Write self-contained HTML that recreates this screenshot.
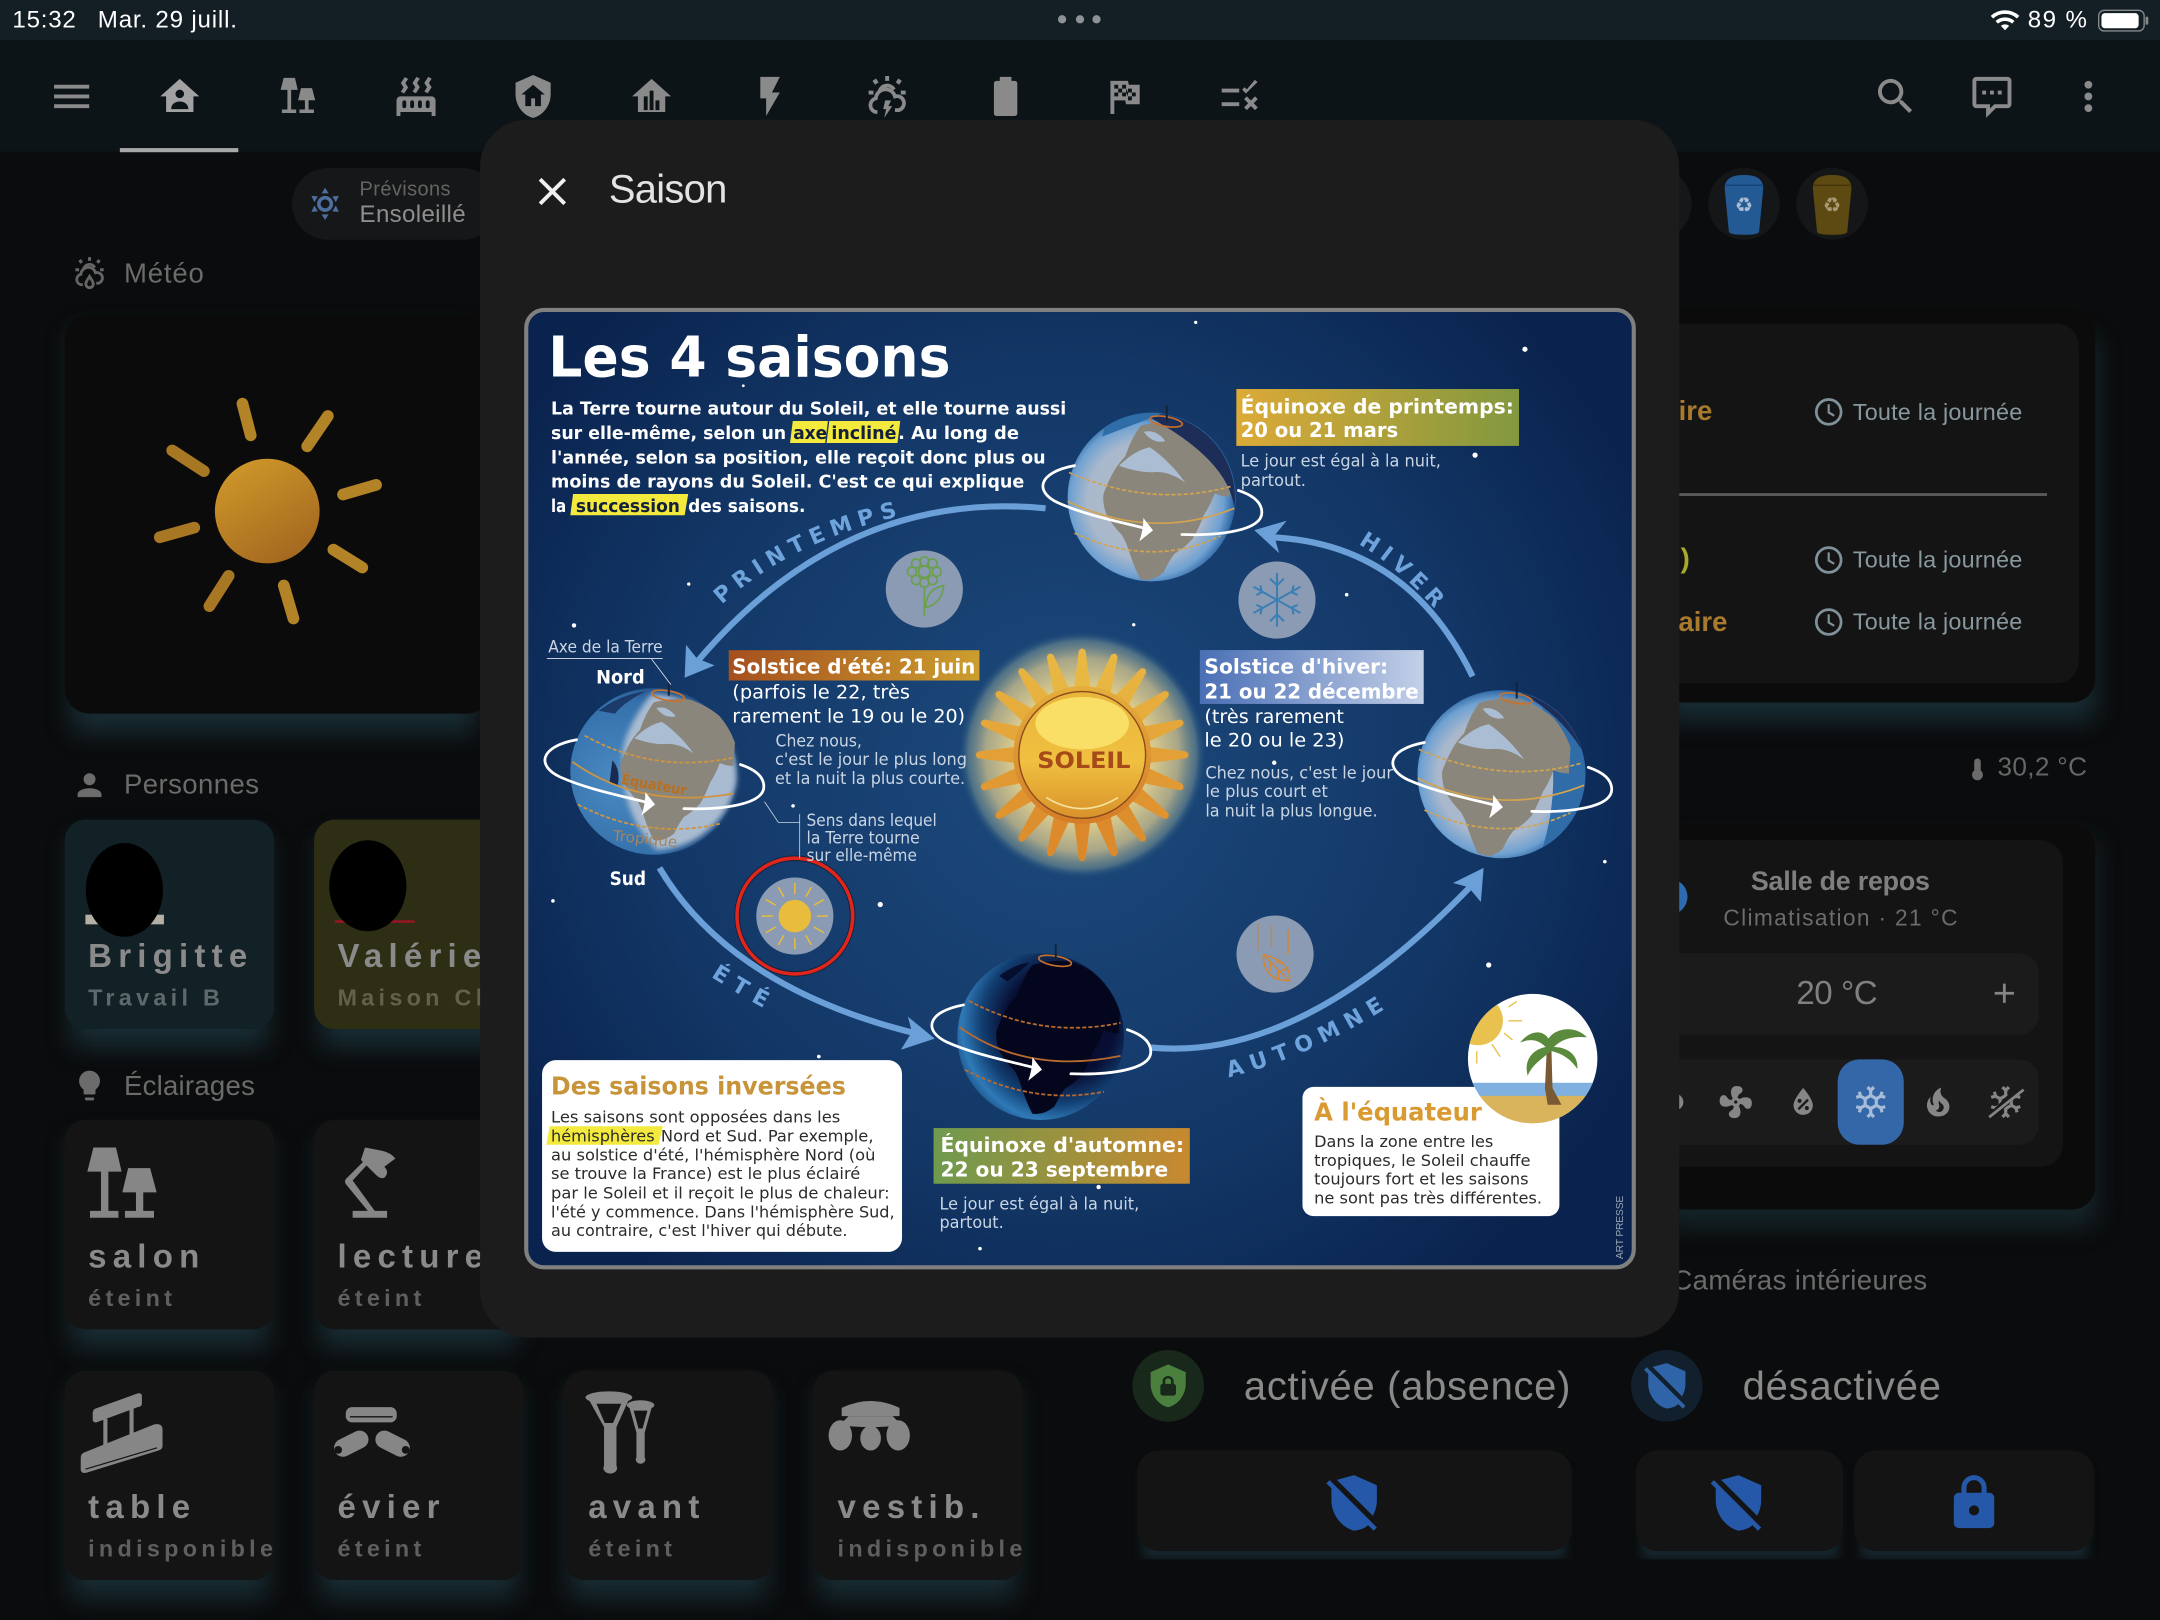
<!DOCTYPE html>
<html lang="fr">
<head>
<meta charset="utf-8">
<title>Saison</title>
<style>
html,body{margin:0;padding:0;background:#0b0c0d;width:2160px;height:1620px;overflow:hidden}
svg{display:block}
text{font-family:"Liberation Sans",sans-serif;white-space:pre}
.m{font-family:"DejaVu Sans","Liberation Sans",sans-serif}
.b{font-weight:700}
.n{font-size:24px;font-weight:700;fill:#8a8a8a;letter-spacing:4.5px}
.s{font-size:17px;font-weight:700;fill:#5f5f5f;letter-spacing:3.1px}
.h{font-size:20px;fill:#6b6b6b}
.t{font-size:17px;fill:#87999f}
.w{font-size:15px;font-weight:700;fill:#fff}
.w2{font-size:13.5px;fill:#fff}
.l{font-size:12px;fill:#c9d5e3}
.k{font-size:11.5px;fill:#2b2b2b}
.p{font-size:13px;font-weight:700;fill:#fff}
.a{font-size:16px;font-weight:700;fill:#6fa3dc}
</style>
</head>
<body>
<svg xmlns="http://www.w3.org/2000/svg" width="2160" height="1620" viewBox="0 0 1568 1176">
<defs>
<filter id="bl" x="-30%" y="-30%" width="160%" height="160%"><feGaussianBlur stdDeviation="9"/></filter>
<filter id="bs" x="-30%" y="-30%" width="160%" height="160%"><feGaussianBlur stdDeviation="4"/></filter>
<filter id="b2" x="-20%" y="-20%" width="140%" height="140%"><feGaussianBlur stdDeviation="2"/></filter>
<radialGradient id="bg" gradientUnits="userSpaceOnUse" cx="770" cy="560" r="470"><stop offset="0" stop-color="#1c4a7c"/><stop offset=".6" stop-color="#133868"/><stop offset="1" stop-color="#0a234e"/></radialGradient>
<radialGradient id="glow" cx=".5" cy=".5" r=".5"><stop offset=".55" stop-color="#dccb8c"/><stop offset=".78" stop-color="#a8a688"/><stop offset=".92" stop-color="#5f7f8c" stop-opacity=".75"/><stop offset="1" stop-color="#1c4a7c" stop-opacity="0"/></radialGradient>
<linearGradient id="sund" x1="0" y1="0" x2="0" y2="1"><stop offset="0" stop-color="#e9b53c"/><stop offset=".55" stop-color="#f0c040"/><stop offset="1" stop-color="#d8922a"/></linearGradient>
<linearGradient id="sunr" x1="0" y1="0" x2="0" y2="1"><stop offset="0" stop-color="#e4ae3c"/><stop offset="1" stop-color="#d67c28"/></linearGradient>
<linearGradient id="ms" x1="0" y1="0" x2=".6" y2="1"><stop offset="0" stop-color="#d49c2a"/><stop offset="1" stop-color="#a56a20"/></linearGradient>
<linearGradient id="g1" x1="0" x2="1"><stop offset="0" stop-color="#a64f1e"/><stop offset="1" stop-color="#cc9e2e"/></linearGradient>
<linearGradient id="g2" x1="0" x2="1"><stop offset="0" stop-color="#dcaa37"/><stop offset="1" stop-color="#82983f"/></linearGradient>
<linearGradient id="g3" x1="0" x2="1"><stop offset="0" stop-color="#4a6fb5"/><stop offset="1" stop-color="#c3d0e8"/></linearGradient>
<linearGradient id="g4" x1="0" x2="1"><stop offset="0" stop-color="#6f9a4e"/><stop offset="1" stop-color="#c8892f"/></linearGradient>
<radialGradient id="gl" cx=".47" cy=".52" r=".52"><stop offset="0" stop-color="#b4bcc8"/><stop offset=".68" stop-color="#a9b8cc"/><stop offset=".88" stop-color="#6fa1d2"/><stop offset="1" stop-color="#2f68a4"/></radialGradient>
<radialGradient id="gm" cx=".3" cy=".55" r=".6"><stop offset="0" stop-color="#4b8ac2"/><stop offset=".8" stop-color="#3470aa"/><stop offset="1" stop-color="#224f85"/></radialGradient>
<radialGradient id="gd" cx=".62" cy=".42" r=".66"><stop offset="0" stop-color="#05092a"/><stop offset=".5" stop-color="#080f34"/><stop offset=".72" stop-color="#123f72"/><stop offset=".9" stop-color="#2f7ab8"/><stop offset="1" stop-color="#1d5488"/></radialGradient>
<clipPath id="palm"><circle cx="1112.6" cy="768.5" r="47"/></clipPath>
<clipPath id="gc"><circle r="60"/></clipPath>

<symbol id="i-menu" viewBox="0 0 24 24"><path d="M3,6H21V8H3V6M3,11H21V13H3V11M3,16H21V18H3V16Z"/></symbol>
<symbol id="i-homeacc" viewBox="0 0 24 24"><path fill-rule="evenodd" d="M12,3L2,12H5V20H19V12H22L12,3M12,8.5A2.2,2.2 0 0,1 14.2,10.7A2.2,2.2 0 0,1 12,12.9A2.2,2.2 0 0,1 9.8,10.7A2.2,2.2 0 0,1 12,8.5M7.6,18.5C7.6,16 9.6,14.6 12,14.6C14.4,14.6 16.4,16 16.4,18.5Z"/></symbol>
<symbol id="i-radiator" viewBox="0 0 24 24"><path fill-rule="evenodd" d="M7.95,3L6.53,5.19L7.95,7.4H7.94L5.95,10.5L4.22,9.6L5.64,7.39L4.22,5.19L6.22,2.09L7.95,3M13.95,2.89L12.53,5.1L13.95,7.3L13.94,7.31L11.95,10.4L10.22,9.5L11.64,7.3L10.22,5.1L12.22,2L13.95,2.89M20,2.89L18.56,5.1L20,7.3V7.31L18,10.4L16.25,9.5L17.67,7.3L16.25,5.1L18.25,2L20,2.89M2,22V14A2,2 0 0,1 4,12H20A2,2 0 0,1 22,14V22H20V20H4V22H2M6,14A1,1 0 0,0 5,15V17A1,1 0 0,0 6,18A1,1 0 0,0 7,17V15A1,1 0 0,0 6,14M10,14A1,1 0 0,0 9,15V17A1,1 0 0,0 10,18A1,1 0 0,0 11,17V15A1,1 0 0,0 10,14M14,14A1,1 0 0,0 13,15V17A1,1 0 0,0 14,18A1,1 0 0,0 15,17V15A1,1 0 0,0 14,14M18,14A1,1 0 0,0 17,15V17A1,1 0 0,0 18,18A1,1 0 0,0 19,17V15A1,1 0 0,0 18,14Z"/></symbol>
<symbol id="i-shhome" viewBox="0 0 24 24"><path fill-rule="evenodd" d="M12,1L3,5V11C3,16.55 6.84,21.74 12,23C17.16,21.74 21,16.55 21,11V5L12,1M12,6L18,11H16V17H13V13H11V17H8V11H6L12,6Z"/></symbol>
<symbol id="i-homean" viewBox="0 0 24 24"><path fill-rule="evenodd" d="M12,3L2,12H5V20H19V12H22L12,3M8,12H10V19H8V12M11,9H13V19H11V9M14,14H16V19H14V14Z"/></symbol>
<symbol id="i-flash" viewBox="0 0 24 24"><path d="M7,2V13H10V22L17,10H13L17,2H7Z"/></symbol>
<symbol id="i-battery" viewBox="0 0 24 24"><path d="M16.67,4H15V2H9V4H7.33A1.33,1.33 0 0,0 6,5.33V20.67C6,21.4 6.6,22 7.33,22H16.67A1.33,1.33 0 0,0 18,20.67V5.33C18,4.6 17.4,4 16.67,4Z"/></symbol>
<symbol id="i-flag" viewBox="0 0 24 24"><path d="M14.4,6H20V16H13L12.6,14H7V21H5V4H14L14.4,6M14,14H16V12H18V10H16V8H14V10L13,8V6H11V8H9V6H7V8H9V10H7V12H9V10H11V12H13V10L14,12V14M11,10V8H13V10H11M14,10H16V12H14V10Z"/></symbol>
<symbol id="i-checks" viewBox="0 0 24 24"><path d="M2,8H11V10H2V8M2,15H11V17H2V15M14.4,10.5L12.5,8.5L13.7,7.3L14.9,8.4L19,3.5L20.4,4.6L14.4,10.5M13.5,13.4L14.9,12L17,14.1L19.1,12L20.5,13.4L18.4,15.5L20.5,17.6L19.1,19L17,16.9L14.9,19L13.5,17.6L15.6,15.5L13.5,13.4Z"/></symbol>
<symbol id="i-search" viewBox="0 0 24 24"><path d="M9.5,3A6.5,6.5 0 0,1 16,9.5C16,11.11 15.41,12.59 14.44,13.73L14.71,14H15.5L20.5,19L19,20.5L14,15.5V14.71L13.73,14.44C12.59,15.41 11.11,16 9.5,16A6.5,6.5 0 0,1 3,9.5A6.5,6.5 0 0,1 9.5,3M9.5,5C7,5 5,7 5,9.5C5,12 7,14 9.5,14C12,14 14,12 14,9.5C14,7 12,5 9.5,5Z"/></symbol>
<symbol id="i-msg" viewBox="0 0 24 24"><path fill-rule="evenodd" d="M4,2H20A2,2 0 0,1 22,4V16A2,2 0 0,1 20,18H14L9,23V18H4A2,2 0 0,1 2,16V4A2,2 0 0,1 4,2M4,4V16H11V18.2L13.2,16H20V4H4M7,9H9V11H7V9M11,9H13V11H11V9M15,9H17V11H15V9Z"/></symbol>
<symbol id="i-dots" viewBox="0 0 24 24"><path d="M12,16A2,2 0 0,1 14,18A2,2 0 0,1 12,20A2,2 0 0,1 10,18A2,2 0 0,1 12,16M12,10A2,2 0 0,1 14,12A2,2 0 0,1 12,14A2,2 0 0,1 10,12A2,2 0 0,1 12,10M12,4A2,2 0 0,1 14,6A2,2 0 0,1 12,8A2,2 0 0,1 10,6A2,2 0 0,1 12,4Z"/></symbol>
<symbol id="i-close" viewBox="0 0 24 24"><path d="M19,6.41L17.59,5L12,10.59L6.41,5L5,6.41L10.59,12L5,17.59L6.41,19L12,13.41L17.59,19L19,17.59L13.41,12L19,6.41Z"/></symbol>
<symbol id="i-acc" viewBox="0 0 24 24"><path d="M12,4A4,4 0 0,1 16,8A4,4 0 0,1 12,12A4,4 0 0,1 8,8A4,4 0 0,1 12,4M12,14C16.42,14 20,15.79 20,18V20H4V18C4,15.79 7.58,14 12,14Z"/></symbol>
<symbol id="i-bulb" viewBox="0 0 24 24"><path d="M12,2A7,7 0 0,0 5,9C5,11.38 6.19,13.47 8,14.74V17A1,1 0 0,0 9,18H15A1,1 0 0,0 16,17V14.74C17.81,13.47 19,11.38 19,9A7,7 0 0,0 12,2M9,21A1,1 0 0,0 10,22H14A1,1 0 0,0 15,21V20H9V21Z"/></symbol>
<symbol id="i-lock" viewBox="0 0 24 24"><path fill-rule="evenodd" d="M12,17A2,2 0 0,0 14,15C14,13.89 13.1,13 12,13A2,2 0 0,0 10,15A2,2 0 0,0 12,17M18,8A2,2 0 0,1 20,10V20A2,2 0 0,1 18,22H6A2,2 0 0,1 4,20V10C4,8.89 4.9,8 6,8H7V6A5,5 0 0,1 12,1A5,5 0 0,1 17,6V8H18M12,3A3,3 0 0,0 9,6V8H15V6A3,3 0 0,0 12,3Z"/></symbol>
<symbol id="i-shoff" viewBox="0 0 24 24"><path d="M1,4.27L2.28,3L21,21.72L19.73,23L17.5,20.79C16.23,22 14.9,22.6 12,23C7,21.74 3,16.55 3,11V6.27L1,4.27M12,1L21,5V11C21,13.14 20.4,15.23 19.4,17.1L5.14,2.86L12,1Z"/></symbol>
<symbol id="i-shlock" viewBox="0 0 24 24"><path fill-rule="evenodd" d="M12,1L3,5V11C3,16.55 6.84,21.74 12,23C17.16,21.74 21,16.55 21,11V5L12,1M12,7C13.4,7 14.8,8.1 14.8,9.5V11C15.4,11 16,11.6 16,12.3V15.8C16,16.4 15.4,17 14.7,17H9.2C8.6,17 8,16.4 8,15.7V12.2C8,11.6 8.6,11 9.2,11V9.5C9.2,8.1 10.6,7 12,7M12,8.2C11.2,8.2 10.5,8.7 10.5,9.5V11H13.5V9.5C13.5,8.7 12.8,8.2 12,8.2Z"/></symbol>
<symbol id="i-fan" viewBox="0 0 24 24"><path d="M12,11A1,1 0 0,0 11,12A1,1 0 0,0 12,13A1,1 0 0,0 13,12A1,1 0 0,0 12,11M12.5,2C17,2 17.11,5.57 14.75,6.75C13.76,7.24 13.32,8.29 13.13,9.22C13.61,9.42 14.03,9.73 14.35,10.13C18.05,8.13 22.03,8.92 22.03,12.5C22.03,17 18.46,17.1 17.28,14.73C16.78,13.74 15.72,13.3 14.79,13.11C14.59,13.59 14.28,14 13.88,14.34C15.87,18.03 15.08,22 11.5,22C7,22 6.91,18.42 9.27,17.24C10.25,16.75 10.69,15.71 10.89,14.79C10.4,14.59 9.97,14.27 9.65,13.87C5.96,15.85 2,15.07 2,11.5C2,7 5.56,6.89 6.74,9.26C7.24,10.25 8.29,10.68 9.22,10.87C9.41,10.39 9.73,9.97 10.14,9.65C8.15,5.96 8.94,2 12.5,2Z"/></symbol>
<symbol id="i-snow" viewBox="0 0 24 24"><path fill-rule="evenodd" d="M20.79,13.95L18.46,14.57L16.46,13.44V10.56L18.46,9.43L20.79,10.05L21.31,8.12L19.54,7.65L20,5.88L18.07,5.36L17.45,7.69L15.45,8.82L13,7.38V5.12L14.71,3.41L13.29,2L12,3.29L10.71,2L9.29,3.41L11,5.12V7.38L8.5,8.82L6.5,7.69L5.92,5.36L4,5.88L4.47,7.65L2.7,8.12L3.22,10.05L5.55,9.43L7.55,10.56V13.45L5.55,14.58L3.22,13.96L2.7,15.89L4.47,16.36L4,18.12L5.93,18.64L6.55,16.31L8.55,15.18L11,16.62V18.88L9.29,20.59L10.71,22L12,20.71L13.29,22L14.7,20.59L13,18.88V16.62L15.5,15.17L17.5,16.3L18.12,18.63L20,18.12L19.53,16.35L21.3,15.88L20.79,13.95M9.5,10.56L12,9.11L14.5,10.56V13.44L12,14.89L9.5,13.44V10.56Z"/></symbol>
<symbol id="i-fire" viewBox="0 0 24 24"><path d="M17.66 11.2C17.43 10.9 17.15 10.64 16.89 10.38C16.22 9.78 15.46 9.35 14.82 8.72C13.33 7.26 13 4.85 13.95 3C13 3.23 12.17 3.75 11.46 4.32C8.87 6.4 7.85 10.07 9.07 13.22C9.11 13.32 9.15 13.42 9.15 13.55C9.15 13.77 9 13.97 8.8 14.05C8.57 14.15 8.33 14.09 8.14 13.93C8.08 13.88 8.04 13.83 8 13.76C6.87 12.33 6.69 10.28 7.45 8.64C5.78 10 4.87 12.3 5 14.47C5.06 14.97 5.12 15.47 5.29 15.97C5.43 16.57 5.7 17.17 6 17.7C7.08 19.43 8.95 20.67 10.96 20.92C13.1 21.19 15.39 20.8 17.03 19.32C18.86 17.66 19.5 15 18.56 12.72L18.43 12.46C18.22 12 17.66 11.2 17.66 11.2M14.5 17.5C14.22 17.74 13.76 18 13.4 18.1C12.28 18.5 11.16 17.94 10.5 17.28C11.69 17 12.4 16.12 12.61 15.23C12.78 14.43 12.46 13.77 12.33 13C12.21 12.26 12.23 11.63 12.5 10.94C12.69 11.32 12.89 11.7 13.13 12C13.9 13 15.11 13.44 15.37 14.8C15.41 14.94 15.43 15.08 15.43 15.23C15.46 16.05 15.1 16.95 14.5 17.5H14.5Z"/></symbol>
<symbol id="i-water" viewBox="0 0 24 24"><path fill-rule="evenodd" d="M12,3.25C12,3.25 6,10 6,14C6,17.32 8.69,20 12,20A6,6 0 0,0 18,14C18,10 12,3.25 12,3.25M14.47,9.97L15.53,11.03L9.53,17.03L8.47,15.97M9.75,10A1.25,1.25 0 0,1 11,11.25A1.25,1.25 0 0,1 9.75,12.5A1.25,1.25 0 0,1 8.5,11.25A1.25,1.25 0 0,1 9.75,10M14.25,14.5A1.25,1.25 0 0,1 15.5,15.75A1.25,1.25 0 0,1 14.25,17A1.25,1.25 0 0,1 13,15.75A1.25,1.25 0 0,1 14.25,14.5Z"/></symbol>
<symbol id="i-clock" viewBox="0 0 24 24"><circle cx="12" cy="12" r="9" fill="none" stroke="currentColor" stroke-width="2"/><path d="M12,6.5V12.4L16,14.8" fill="none" stroke="currentColor" stroke-width="1.6"/></symbol>
<symbol id="i-sunny" viewBox="0 0 24 24"><path fill-rule="evenodd" d="M12,2L14.2,5.5H9.8L12,2M12,22L9.8,18.5H14.2L12,22M3.5,7L7.5,7.3L5.3,11L3.5,7M20.5,17L16.5,16.7L18.7,13L20.5,17M3.5,17L5.3,13L7.5,16.7L3.5,17M20.5,7L18.7,11L16.5,7.3L20.5,7M12,7A5,5 0 0,1 17,12A5,5 0 0,1 12,17A5,5 0 0,1 7,12A5,5 0 0,1 12,7M12,9.2A2.8,2.8 0 0,0 9.2,12A2.8,2.8 0 0,0 12,14.8A2.8,2.8 0 0,0 14.8,12A2.8,2.8 0 0,0 12,9.2Z"/></symbol>
<symbol id="i-storm" viewBox="0 0 24 24"><g fill="none" stroke="currentColor" stroke-width="1.9"><path d="M8,10A4,4 0 0,1 15.5,8.5"/><path d="M7,20H6.2A3.6,3.6 0 0,1 6.2,13A5,5 0 0,1 16,12A3.6,3.6 0 0,1 18,19H16"/></g><path fill="currentColor" d="M11,14H14L12.6,17H14.6L10.5,23L11.5,18.5H10Z"/><path fill="currentColor" d="M11,1.5H13V4H11ZM4.5,4L6.3,2.8L7.6,4.8L5.8,6ZM19.5,4L17.7,2.8L16.4,4.8L18.2,6ZM2.5,9H5V11H2.5ZM19,9H21.5V11H19Z"/></symbol>
<symbol id="i-rain" viewBox="0 0 24 24"><g fill="none" stroke="currentColor" stroke-width="1.9"><path d="M8,10A4,4 0 0,1 15.5,8.5"/><path d="M7.5,20H6.2A3.6,3.6 0 0,1 6.2,13A5,5 0 0,1 16,12A3.6,3.6 0 0,1 18,19H16.500"/><path d="M12,14.500C10.500,17 9.500,18 9.500,19.500A2.500,2.500 0 0,0 14.500,19.500C14.500,18 13.500,17 12,14.500Z"/></g><path fill="currentColor" d="M11,1.5H13V4H11ZM4.5,4L6.3,2.8L7.6,4.8L5.8,6ZM19.5,4L17.7,2.8L16.4,4.8L18.2,6ZM2.5,9H5V11H2.5ZM19,9H21.5V11H19Z"/></symbol>
<symbol id="i-therm" viewBox="0 0 24 24"><path d="M15,13V5A3,3 0 0,0 9,5V13A5,5 0 1,0 15,13Z"/></symbol>

<symbol id="i-lamps" viewBox="60 830 58 58">
<path d="M67.800,833H84.200L88.300,850.500H63.400ZM73.300,850.500H78.700V879H86V884H65.300V879H73.300ZM93,848H109L113.700,865.600H88.800ZM98.700,865.600H104V879H111.800V884H90.700V879H98.700Z"/>
</symbol>

<g id="ray"><path d="M-6,-47L-2.500,-75.500Q0,-79 2.500,-75.500L6,-47Z"/></g>

<g id="land"><path d="M0,-50Q14,-54 27,-52Q40,-47 48,-40Q55,-32 59,-21L58,-4Q53,-4 48,-6Q45,2 41,8Q38,16 34,23Q29,29 22,33Q18,38 15,45Q8,51 0,50Q-4,42 -7,33Q-9,26 -12,21Q-18,15 -22,8Q-25,0 -24,-6Q-21,-14 -17,-21Q-14,-26 -10,-30Q-6,-42 0,-50Z"/></g>
<g id="ring" fill="none" stroke="#fff" stroke-width="2" stroke-linecap="round"><path d="M-56,-23C-83,-18 -85,-4 -68,4C-48,13 -22,18 -3,23"/><path d="M22,27C50,28 80,24 80,11C80,3 72,-2 63,-5"/><path d="M-6,15L1,24L-9,32Q-6,24 -6,15Z" fill="#fff" stroke="none"/></g>
<g id="eu" fill="#aabdd2"><path d="M-14,-24Q-4,-34 6,-36Q12,-32 19,-25Q24,-20 29,-13Q20,-20 10,-20Q0,-19 -14,-24Z"/><path d="M2,-46Q10,-48 16,-40Q8,-38 2,-46Z"/></g>
<g id="pole"><ellipse cx="10.500" cy="-55" rx="12" ry="3.500" transform="rotate(10 10.500 -55)" fill="none" stroke="#c8712c" stroke-width="1.200"/><path d="M11,-67V-55" stroke="#14233c" stroke-width="1.400"/></g>
</defs>

<!-- page -->
<rect width="1568" height="1176" fill="#0b0c0d"/>
<rect width="1568" height="29" fill="#141e25"/>
<rect y="29" width="1568" height="81" fill="#0d1418"/>

<text x="9" y="20" font-size="17.5" fill="#fff" textLength="46">15:32</text>
<text x="71" y="20" font-size="17.5" fill="#fff" textLength="101">Mar. 29 juill.</text>
<circle cx="771" cy="14" r="3" fill="#8d9296"/><circle cx="784" cy="14" r="3" fill="#8d9296"/><circle cx="796" cy="14" r="3" fill="#8d9296"/>
<g fill="none" stroke="#fff" stroke-width="2.6"><path d="M1446,12.5A14,14 0 0,1 1465,12.5"/><path d="M1449.5,16.2A9,9 0 0,1 1461.5,16.2"/></g><path d="M1452.5,18.8A4.5,4.5 0 0,1 1458.5,18.8L1455.5,22Z" fill="#fff"/>
<text x="1472" y="20" font-size="17.5" fill="#fff" textLength="43">89 %</text>
<rect x="1523.5" y="7.5" width="33" height="15" rx="4" fill="none" stroke="#85898c" stroke-width="1"/><rect x="1525.5" y="9.5" width="27" height="11" rx="2.5" fill="#fff"/><rect x="1557.5" y="12" width="2" height="6" rx="1" fill="#85898c"/>

<g fill="#8a8a8a">
<use href="#i-menu" x="35" y="53" width="34" height="34"/>
<use href="#i-homeacc" x="113.5" y="53" width="34" height="34" fill="#a2a2a2"/>
<use href="#i-lamps" x="202" y="55" width="29" height="29"/>
<use href="#i-radiator" x="285" y="53" width="34" height="34"/>
<use href="#i-shhome" x="370" y="53" width="34" height="34"/>
<use href="#i-homean" x="456" y="53" width="34" height="34"/>
<use href="#i-flash" x="542" y="53" width="34" height="34"/>
<use href="#i-storm" x="627" y="53" width="34" height="34" color="#8a8a8a"/>
<use href="#i-battery" x="713" y="53" width="34" height="34"/>
<use href="#i-flag" x="799" y="53" width="34" height="34"/>
<use href="#i-checks" x="884" y="53" width="34" height="34"/>
<use href="#i-search" x="1359" y="53" width="34" height="34"/>
<use href="#i-msg" x="1429" y="53" width="34" height="34"/>
<use href="#i-dots" x="1499" y="53" width="34" height="34"/>
</g>
<rect x="87" y="107.5" width="86" height="3" fill="#a8a8a8"/>

<!-- chips -->
<rect x="212" y="122" width="150" height="52" rx="26" fill="#161718"/>
<use href="#i-sunny" x="222" y="134" width="28" height="28" fill="#4e6e9e"/>
<text x="261" y="142" font-size="14.5" fill="#646464" textLength="66">Prévisons</text>
<text x="261" y="161" font-size="17.5" fill="#8e8e8e" textLength="77">Ensoleillé</text>
<circle cx="1202" cy="148" r="26" fill="#161718"/>
<circle cx="1266" cy="148" r="26" fill="#151617"/>
<path d="M1252,137C1252,129 1258,127 1266,127C1274,127 1280,129 1280,137L1277,168C1277,170 1272,170.500 1266,170.500C1260,170.500 1255,170 1255,168Z" fill="#235a94"/>
<path d="M1252,134.500H1280" stroke="#174273" stroke-width="1"/>
<text x="1266" y="154" font-size="15" fill="#a9bed2" text-anchor="middle">♻</text>
<circle cx="1330" cy="148" r="26" fill="#151617"/>
<path d="M1316,137C1316,129 1322,127 1330,127C1338,127 1344,129 1344,137L1341,168C1341,170 1336,170.500 1330,170.500C1324,170.500 1319,170 1319,168Z" fill="#5c4a12"/>
<path d="M1316,134.500H1344" stroke="#44360c" stroke-width="1"/>
<text x="1330" y="154" font-size="15" fill="#a89b75" text-anchor="middle">♻</text>

<!-- left: meteo -->
<use href="#i-rain" x="52" y="184" width="26" height="28" color="#656565"/>
<text x="90" y="205" class="h" textLength="58">Météo</text>
<rect x="52" y="240" width="293" height="292" fill="#1f3a44" opacity=".7" filter="url(#bl)"/>
<rect x="47" y="228" width="310" height="290" rx="18" fill="#0b0b0b"/>
<circle cx="194" cy="371" r="38" fill="url(#ms)"/>
<g stroke="#b28327" stroke-width="8.500" stroke-linecap="round"><path d="M176,293L182,316"/><path d="M238,302L223,324"/><path d="M273,352L249,359"/><path d="M263,412L242,399"/><path d="M213,449L206,425"/></g>
<g stroke="#a87724" stroke-width="8.500" stroke-linecap="round"><path d="M152,440L166,418"/><path d="M116,390L141,383"/><path d="M125,327L148,342"/></g>

<!-- personnes -->
<use href="#i-acc" x="52" y="557" width="26" height="26" fill="#6c6c6c"/>
<text x="90" y="576" class="h" textLength="98">Personnes</text>
<rect x="52" y="608" width="142" height="152" fill="#1d3a44" opacity=".7" filter="url(#bl)"/>
<rect x="233" y="608" width="142" height="152" fill="#1d3a44" opacity=".7" filter="url(#bl)"/>
<rect x="47" y="595" width="152" height="152" rx="15" fill="#112125"/>
<rect x="228" y="595" width="152" height="152" rx="15" fill="#2e2e14"/>
<rect x="62" y="664" width="57" height="7" fill="#b5b0a6"/>
<ellipse cx="90.300" cy="646" rx="28" ry="34" fill="#000"/>
<rect x="243" y="668" width="58" height="2" fill="#8f1722"/>
<ellipse cx="267" cy="643" rx="28" ry="33" fill="#000"/>
<text x="64" y="702" class="n">Brigitte</text>
<text x="64" y="730" class="s" style="fill:#5f696b">Travail B</text>
<text x="245" y="702" class="n">Valérie</text>
<text x="245" y="730" class="s" style="fill:#62624a">Maison Cl</text>

<!-- eclairages -->
<use href="#i-bulb" x="52" y="775" width="26" height="26" fill="#6c6c6c"/>
<text x="90" y="795" class="h" textLength="95">Éclairages</text>
<g fill="#1d3a44" opacity=".7" filter="url(#bl)">
<rect x="52" y="826" width="142" height="152"/><rect x="233" y="826" width="142" height="152"/>
<rect x="52" y="1008" width="142" height="152"/><rect x="233" y="1008" width="142" height="152"/><rect x="414" y="1008" width="142" height="152"/><rect x="595" y="1008" width="142" height="152"/>
</g>
<g fill="#141414">
<rect x="47" y="813" width="152" height="152" rx="15"/><rect x="228" y="813" width="152" height="152" rx="15"/>
<rect x="47" y="995" width="152" height="152" rx="15"/><rect x="228" y="995" width="152" height="152" rx="15"/><rect x="409" y="995" width="152" height="152" rx="15"/><rect x="590" y="995" width="152" height="152" rx="15"/>
</g>
<use href="#i-lamps" x="60" y="830" width="58" height="58" fill="#868686"/>
<path d="M256,879H281V884H256ZM267,879L251,859.500Q249.500,857 252,855L264,843L266.500,845.500L256,857L272,879Z" fill="#868686"/>
<path d="M265,833L278,835.500Q284,837 287,841L279,847Q283,851 279,855Q276,856 273,853L262,842Z" fill="#868686"/>
<!-- table -->
<path d="M67.300,1026Q67.300,1023 70,1022.300L100,1011.500Q103,1011 103,1013.500V1019Q103,1021 100,1021.500L70,1032.500Q67.300,1033 67.300,1030Z" fill="#868686"/>
<path d="M75,1030H78V1049H75ZM94,1020H97V1042H94Z" fill="#868686"/>
<path d="M58.600,1058Q58.600,1055 62,1054L112,1034Q118,1033 118,1038V1050Q118,1052 115,1053L63,1069Q59,1070 58.600,1067Z" fill="#868686"/>
<path d="M62,1066.500L114,1051" stroke="#141414" stroke-width=".9" fill="none"/>
<!-- evier -->
<rect x="251" y="1021.500" width="37" height="11" rx="4.500" fill="#868686"/>
<rect x="254" y="1028" width="31" height="1" fill="#141414"/>
<g stroke="#868686" stroke-width="13" stroke-linecap="round"><path d="M249,1051L261,1045"/><path d="M279,1045L291,1051"/></g>
<circle cx="245.500" cy="1052.500" r="2.800" fill="#141414"/><circle cx="294.500" cy="1052.500" r="2.800" fill="#141414"/>
<!-- avant -->
<g fill="#868686">
<ellipse cx="442" cy="1014.500" rx="17" ry="4.500"/><path d="M428,1017H456L447.500,1036V1064A5,4 0 1,1 438.500,1064V1036Z"/>
<ellipse cx="465" cy="1020" rx="10" ry="3.500"/><path d="M457,1022H473L468,1040V1058A3.500,3 0 1,1 462,1058V1040Z"/>
</g>
<path d="M433,1019H451L445,1033H439ZM460,1024H470L466.500,1037H463.500Z" fill="#141414"/>
<!-- vestib -->
<g fill="#868686">
<path d="M611,1022Q632,1012 653,1022V1028H611Z"/>
<ellipse cx="610" cy="1042" rx="8.500" ry="11"/><ellipse cx="632" cy="1044" rx="7.500" ry="9"/><ellipse cx="652" cy="1042" rx="8.500" ry="11"/>
<path d="M616,1028H648L655,1035L636,1036H628L609,1035Z"/>
</g>
<text x="64" y="920" class="n">salon</text><text x="64" y="948" class="s">éteint</text>
<text x="245" y="920" class="n">lecture</text><text x="245" y="948" class="s">éteint</text>
<text x="64" y="1102" class="n">table</text><text x="64" y="1130" class="s">indisponible</text>
<text x="245" y="1102" class="n">évier</text><text x="245" y="1130" class="s">éteint</text>
<text x="427" y="1102" class="n">avant</text><text x="427" y="1130" class="s">éteint</text>
<text x="608" y="1102" class="n">vestib.</text><text x="608" y="1130" class="s">indisponible</text>

<!-- right calendar -->
<rect x="1210" y="245" width="311" height="278" fill="#1f3a44" opacity=".7" filter="url(#bl)"/>
<rect x="1100" y="224" width="421" height="286" rx="17" fill="#0b0b0b"/>
<rect x="1100" y="235" width="409" height="261" rx="16" fill="#141414"/>
<text x="1243" y="305" font-size="20" font-weight="700" fill="#a87a2d" text-anchor="end">aire</text>
<rect x="1215" y="358" width="271" height="2" fill="#5c5c5c"/>
<text x="1220" y="412" font-size="20" font-weight="700" fill="#a8a82a">)</text>
<text x="1254" y="458" font-size="20" font-weight="700" fill="#a87a2d" text-anchor="end">aire</text>
<use href="#i-clock" x="1315.500" y="287" width="24" height="24" color="#7f9299"/>
<use href="#i-clock" x="1315.500" y="394.500" width="24" height="24" color="#7f9299"/>
<use href="#i-clock" x="1315.500" y="439.500" width="24" height="24" color="#7f9299"/>
<text x="1345" y="305" class="t" textLength="123">Toute la journée</text>
<text x="1345" y="412" class="t" textLength="123">Toute la journée</text>
<text x="1345" y="457" class="t" textLength="123">Toute la journée</text>

<use href="#i-therm" x="1426" y="549" width="19" height="19" fill="#6a6a6a"/>
<text x="1450" y="563" font-size="19" fill="#666" textLength="65">30,2 °C</text>

<!-- climate -->
<rect x="1210" y="610" width="311" height="280" fill="#1f3a44" opacity=".55" filter="url(#bl)"/>
<rect x="1100" y="598" width="421" height="280" rx="17" fill="#0b0b0b"/>
<rect x="1100" y="610" width="397.500" height="237" rx="16" fill="#141414"/>
<circle cx="1212" cy="651" r="13" fill="#2d6ab0"/><circle cx="1212" cy="651" r="6" fill="#141414"/>
<text x="1271" y="646" font-size="19.500" font-weight="700" fill="#7f7f7f" textLength="130">Salle de repos</text>
<text x="1251" y="672" font-size="16.500" fill="#6c6c6c" textLength="170">Climatisation · 21 °C</text>
<rect x="1100" y="692" width="380" height="59" rx="14" fill="#1b1b1b"/>
<text x="1304" y="729" font-size="24" fill="#808080" textLength="59">20 °C</text>
<path d="M1448,721H1462M1455,714V728" stroke="#868686" stroke-width="2"/>
<rect x="1100" y="769" width="380" height="62" rx="14" fill="#1b1b1b"/>
<rect x="1334" y="769" width="48" height="62" rx="16" fill="#3367a8"/>
<circle cx="1216" cy="800" r="6" fill="#868686"/><circle cx="1216" cy="800" r="2.500" fill="#1b1b1b"/>
<g fill="#868686">
<use href="#i-fan" x="1246" y="786" width="28" height="28"/>
<use href="#i-water" x="1295" y="786" width="28" height="28"/>
<use href="#i-snow" x="1344" y="786" width="28" height="28" fill="#a7bcd8"/>
<use href="#i-fire" x="1393" y="786" width="28" height="28"/>
<use href="#i-snow" x="1442" y="786" width="28" height="28"/>
</g>
<path d="M1444,812L1468,788" stroke="#1b1b1b" stroke-width="5"/><path d="M1444,811L1469,791" stroke="#868686" stroke-width="2"/>

<text x="1214" y="936" font-size="20" fill="#6b6b6b" textLength="185">Caméras intérieures</text>

<!-- alarm -->
<circle cx="848" cy="1006" r="26" fill="#18281a"/>
<use href="#i-shlock" x="831" y="989" width="34" height="34" fill="#4a7f3e"/>
<text x="903" y="1016" font-size="29" fill="#8a8a8a" textLength="237">activée (absence)</text>
<circle cx="1210" cy="1006" r="26" fill="#12202e"/>
<use href="#i-shoff" x="1192" y="988" width="36" height="36" fill="#2f65a8"/>
<text x="1265" y="1016" font-size="29" fill="#8a8a8a" textLength="144">désactivée</text>
<clipPath id="cb"><rect x="700" y="1000" width="868" height="132"/></clipPath>
<g clip-path="url(#cb)">
<g fill="#1f3a44" opacity=".6" filter="url(#bs)"><rect x="830" y="1065" width="306" height="67"/><rect x="1192" y="1065" width="142" height="67"/><rect x="1351" y="1065" width="164" height="67"/></g>
</g>
<g fill="#141414">
<rect x="825.500" y="1053" width="315.500" height="73" rx="16"/><rect x="1187.500" y="1053" width="150.500" height="73" rx="16"/><rect x="1346" y="1053" width="174" height="73" rx="16"/>
</g>
<use href="#i-shoff" x="961" y="1069" width="44" height="44" fill="#2558a8"/>
<use href="#i-shoff" x="1240" y="1069" width="44" height="44" fill="#2558a8"/>
<use href="#i-lock" x="1411" y="1069" width="44" height="44" fill="#2558a8"/>

<!-- dialog -->
<rect x="348.500" y="87" width="870.500" height="884" rx="34" fill="#1c1c1c"/>
<use href="#i-close" x="384" y="122" width="34" height="34" fill="#f0f0f0"/>
<text x="442" y="147" font-size="29" fill="#e3e3e3" textLength="86">Saison</text>

<!-- infographic -->
<rect x="382" y="225" width="804" height="695" rx="13" fill="url(#bg)" stroke="#808080" stroke-width="3"/>

<g fill="#fff">
<circle cx="539.600" cy="280" r="1"/><circle cx="500" cy="424" r="1.200"/><circle cx="416.700" cy="454" r="1.600"/><circle cx="575.700" cy="585" r="1.300"/><circle cx="401.400" cy="654" r="1.300"/><circle cx="639" cy="656.600" r="1.900"/><circle cx="594.400" cy="767" r="1.300"/><circle cx="711.400" cy="906.400" r="1.300"/><circle cx="797.500" cy="861.700" r="1.600"/><circle cx="1107" cy="253.500" r="1.900"/><circle cx="868" cy="234" r="1.200"/><circle cx="1070.800" cy="330.400" r="1.900"/><circle cx="977.600" cy="431.700" r="1.300"/><circle cx="823" cy="453.500" r="1.200"/><circle cx="925" cy="553.700" r="1.600"/><circle cx="1165" cy="625.500" r="1.300"/><circle cx="1080.700" cy="700.500" r="1.900"/>
</g>

<text class="m b" x="398" y="273.400" font-size="40.500" fill="#fff" textLength="292" lengthAdjust="spacingAndGlyphs">Les 4 saisons</text>
<path d="M575.500,305.600H653.500L651.500,321.600H573.500ZM416,358.600H499.600L497,374H414Z" fill="#f4ea3d"/>
<path d="M601.500,305.600L599.500,321.600" stroke="#123466" stroke-width="1"/>
<text class="m p" x="400" y="301" textLength="374" lengthAdjust="spacingAndGlyphs">La Terre tourne autour du Soleil, et elle tourne aussi</text>
<text class="m p" x="400" y="318.700" textLength="170.700" lengthAdjust="spacingAndGlyphs">sur elle-même, selon un</text>
<text class="m p" x="575.800" y="318.700" textLength="24.700" lengthAdjust="spacingAndGlyphs" style="fill:#14203a">axe</text>
<text class="m p" x="603.500" y="318.700" textLength="47.300" lengthAdjust="spacingAndGlyphs" style="fill:#14203a">incliné</text>
<text class="m p" x="652" y="318.700" textLength="87.700" lengthAdjust="spacingAndGlyphs">. Au long de</text>
<text class="m p" x="400" y="336.400" textLength="359" lengthAdjust="spacingAndGlyphs">l'année, selon sa position, elle reçoit donc plus ou</text>
<text class="m p" x="400" y="354" textLength="343.600" lengthAdjust="spacingAndGlyphs">moins de rayons du Soleil. C'est ce qui explique</text>
<text class="m p" x="400" y="371.700" textLength="11" lengthAdjust="spacingAndGlyphs">la</text>
<text class="m p" x="418" y="371.700" textLength="75.600" lengthAdjust="spacingAndGlyphs" style="fill:#14203a">succession</text>
<text class="m p" x="499.500" y="371.700" textLength="85.200" lengthAdjust="spacingAndGlyphs">des saisons.</text>

<!-- arrows -->
<g fill="none" stroke="#6a9fd8" stroke-width="4.500">
<path d="M759,369Q610.500,354.500 503,484"/>
<path d="M1069,491Q1022,394 922,390"/>
<path d="M835.500,760.400Q945,771 1068,643"/>
<path d="M478.700,630Q531,718 668,751"/>
</g>
<g fill="#6a9fd8">
<path d="M497,492L498,468L506,478L518.800,483Z"/>
<path d="M910.500,384.800L934,378L925,389L928.600,401.600Z"/>
<path d="M1077,630L1054.800,641L1066,644L1075,654.800Z"/>
<path d="M678.600,754L659,738L662,749L654,762Z"/>
</g>
<path id="pp" d="M524,439Q575,392 660,373" fill="none"/>
<path id="ph" d="M986,395Q1018,413 1051,453" fill="none"/>
<path id="pa" d="M892,782Q950,768 1014,727" fill="none"/>
<path id="pe" d="M516,709Q542,726 572,741" fill="none"/>
<text class="m a" letter-spacing="5"><textPath href="#pp">PRINTEMPS</textPath></text>
<text class="m a" letter-spacing="4.500"><textPath href="#ph">HIVER</textPath></text>
<text class="m a" letter-spacing="5.800"><textPath href="#pa">AUTOMNE</textPath></text>
<text class="m a" letter-spacing="6"><textPath href="#pe">ÉTÉ</textPath></text>

<!-- icon discs -->
<circle cx="671" cy="427.600" r="28" fill="#8b9bb3"/>
<g fill="none" stroke="#6ba04a" stroke-width="1.200">
<circle cx="671" cy="415" r="4.200"/><circle cx="671" cy="407.500" r="3.300"/><circle cx="677" cy="409" r="3.300"/><circle cx="680" cy="415" r="3.300"/><circle cx="677" cy="421" r="3.300"/><circle cx="671" cy="423" r="3.300"/><circle cx="665" cy="421" r="3.300"/><circle cx="662" cy="415" r="3.300"/><circle cx="665" cy="409" r="3.300"/>
<path d="M671,426V447M672,441Q684,438 685,425Q672,428 672,441"/>
</g>
<circle cx="927" cy="435.600" r="28" fill="#8b9bb3"/>
<g fill="none" stroke="#3c7fb4" stroke-width="1.500">
<path d="M927,416V455M910,426L944,445M910,445L944,426M922,420L927,425L932,420M922,451L927,446L932,451M912,432L916,430L915,425M942,439L938,441L939,446M912,439L916,441L915,446M942,432L938,430L939,425"/>
</g>
<circle cx="577" cy="665" r="28" fill="#8b9bb3"/>
<circle cx="577" cy="665" r="11.800" fill="#e8bc3d"/>
<g stroke="#e8bc3d" stroke-width="1.100"><path d="M577,641V649M577,681V689M553,665H561M593,665H601M565,644L569,651M589,644L585,651M565,686L569,679M589,686L585,679M556,653L563,657M598,653L591,657M556,677L563,673M598,677L591,673"/></g>
<circle cx="577" cy="665" r="42" fill="none" stroke="#14233c" stroke-width="4"/>
<circle cx="577" cy="665" r="42" fill="none" stroke="#e0261c" stroke-width="2.600"/>
<circle cx="925.600" cy="692.600" r="28" fill="#8b9bb3"/>
<g fill="none" stroke="#d8842a" stroke-width="1"><path d="M913,670V690M923,672V688M935,675V693M917,693Q938,698 936,712Q917,712 917,693M917,693L936,712M922,699L922,705M928,704L928,711M926,698L930,699M930,704L935,704"/></g>

<!-- sun -->
<circle cx="785.600" cy="548" r="90" fill="url(#glow)"/>
<g transform="translate(785.600 548)">
<use href="#ray" transform="rotate(0)" fill="#e8b843"/><use href="#ray" transform="rotate(18)" fill="#e8b642"/><use href="#ray" transform="rotate(36)" fill="#e7b240"/><use href="#ray" transform="rotate(54)" fill="#e6ad3d"/><use href="#ray" transform="rotate(72)" fill="#e5a73a"/><use href="#ray" transform="rotate(90)" fill="#e3a036"/><use href="#ray" transform="rotate(108)" fill="#e19a33"/><use href="#ray" transform="rotate(126)" fill="#df9430"/><use href="#ray" transform="rotate(144)" fill="#dd8e2d"/><use href="#ray" transform="rotate(162)" fill="#dc8a2b"/><use href="#ray" transform="rotate(180)" fill="#db882a"/><use href="#ray" transform="rotate(198)" fill="#dc8a2b"/><use href="#ray" transform="rotate(216)" fill="#dd8e2d"/><use href="#ray" transform="rotate(234)" fill="#df9430"/><use href="#ray" transform="rotate(252)" fill="#e19a33"/><use href="#ray" transform="rotate(270)" fill="#e3a036"/><use href="#ray" transform="rotate(288)" fill="#e5a73a"/><use href="#ray" transform="rotate(306)" fill="#e6ad3d"/><use href="#ray" transform="rotate(324)" fill="#e7b240"/><use href="#ray" transform="rotate(342)" fill="#e8b642"/>
<circle r="50" fill="url(#sunr)"/>
<circle r="46" fill="url(#sund)" stroke="#8c4a1c" stroke-width="1"/>
<ellipse cy="-23" rx="34" ry="19" fill="#f9df66"/>
<path d="M-26,31Q0,47 26,31" fill="none" stroke="#f6e3a0" stroke-width="1.200"/>
</g>
<text class="m b" x="753" y="557.500" font-size="16" fill="#a54a18" textLength="67.700" lengthAdjust="spacingAndGlyphs">SOLEIL</text>

<!-- globes -->
<g transform="translate(836 361)">
<circle r="61" fill="url(#gl)"/>
<g clip-path="url(#gc)"><g transform="translate(-8 4) scale(1.12)"><use href="#land" fill="#8b867b"/><use href="#eu"/></g></g>
<path d="M-6,-60.500A61,61 0 0,1 60,8Q56,-28 -6,-60.500Z" fill="#1c2d58"/>
<path d="M-34,-51A61,61 0 0,1 8,-61Q-15,-52 -36,-44Z" fill="#2f6da8"/>
<g fill="none" stroke="#d4a34d" stroke-width="1.200"><path d="M-60,-18Q0,8 58,-8" stroke-dasharray="3 1.500"/><path d="M-61,3Q0,32 60,8"/><path d="M-56,26Q0,52 50,28" stroke-dasharray="3 1.500"/></g>
<use href="#pole"/>
<use href="#ring"/>
</g>
<g transform="translate(1090 562)">
<circle r="61" fill="url(#gl)"/>
<path d="M28,-54A61,61 0 0,1 30,53Q46,0 28,-54Z" fill="#2f6ca8"/>
<path d="M14,-59A61,61 0 0,1 58,-18Q42,-44 14,-59Z" fill="#1c2d58"/>
<g clip-path="url(#gc)"><g transform="translate(-16 4) scale(1.12)"><use href="#land" fill="#8b867b"/><use href="#eu"/></g></g>
<g fill="none" stroke="#d4a34d" stroke-width="1.200"><path d="M-60,-18Q0,8 58,-8" stroke-dasharray="3 1.500"/><path d="M-61,3Q0,32 60,8"/><path d="M-56,26Q0,52 50,28" stroke-dasharray="3 1.500"/></g>
<use href="#pole"/>
<use href="#ring"/>
</g>
<g transform="translate(474.500 560)">
<circle r="60.500" fill="url(#gm)"/>
<path d="M-2,-56Q-26,-24 -22,-6Q-24,30 2,57A60.500,60.500 0 0,0 60,8A60.500,60.500 0 0,0 -2,-56Z" fill="#a9bbd0" filter="url(#b2)"/>
<path d="M-40,-44Q-24,-56 -6,-58Q-22,-50 -28,-42Z" fill="#1c3a6a"/>
<path d="M-30,-8Q-24,-2 -26,10L-32,8Z" fill="#1a2a50"/>
<use href="#land" fill="#8a867c"/><use href="#eu"/>
<g fill="none" stroke="#cf9440" stroke-width="1.300"><path d="M-50,-26Q0,2 58,-10" stroke-dasharray="3 1.500"/><path d="M-59,-7Q-10,28 58,16"/><path d="M-55,24Q-5,50 48,38" stroke-dasharray="3 1.500"/></g>
<text class="m" x="-24" y="9" font-size="10.500" font-weight="700" fill="#b8701f" transform="rotate(10 -24 9)" textLength="48" lengthAdjust="spacingAndGlyphs">Équateur</text>
<text class="m" x="-30" y="50" font-size="10.500" fill="#a58560" transform="rotate(6 -30 50)" textLength="47" lengthAdjust="spacingAndGlyphs">Tropique</text>
<use href="#pole"/>
<use href="#ring"/>
</g>
<g transform="translate(755.400 752.500)">
<circle r="60.500" fill="url(#gd)"/><g clip-path="url(#gc)"><g transform="translate(-6 2) scale(1.08)"><use href="#land" fill="#03061c"/></g></g>
<path d="M-30,-44Q-20,-52 -8,-54Q-16,-46 -24,-40Z" fill="#060e30"/>
<g fill="none" stroke="#b86a2e" stroke-width="1.300"><path d="M-52,-26Q0,2 58,-10" stroke-dasharray="3 1.500"/><path d="M-59,-7Q-10,28 58,14"/><path d="M-55,24Q-5,50 46,40" stroke-dasharray="3 1.500"/></g>
<use href="#pole"/>
<use href="#ring"/>
</g>

<!-- labels -->
<rect x="529" y="472" width="182" height="22" fill="url(#g1)"/>
<text class="m w" x="531.600" y="488.800" textLength="176.400" lengthAdjust="spacingAndGlyphs">Solstice d'été: 21 juin</text>
<text class="m w2" x="531.600" y="507" textLength="129" lengthAdjust="spacingAndGlyphs">(parfois le 22, très</text>
<text class="m w2" x="531.600" y="524.600" textLength="169" lengthAdjust="spacingAndGlyphs">rarement le 19 ou le 20)</text>
<text class="m l" x="563" y="542" textLength="62.700" lengthAdjust="spacingAndGlyphs">Chez nous,</text>
<text class="m l" x="562.600" y="555.500" textLength="139.400" lengthAdjust="spacingAndGlyphs">c'est le jour le plus long</text>
<text class="m l" x="562.600" y="569" textLength="138" lengthAdjust="spacingAndGlyphs">et la nuit la plus courte.</text>
<text class="m l" x="585.500" y="599.600" textLength="94.500" lengthAdjust="spacingAndGlyphs">Sens dans lequel</text>
<text class="m l" x="585.500" y="612.400" textLength="82.200" lengthAdjust="spacingAndGlyphs">la Terre tourne</text>
<text class="m l" x="585.500" y="625" textLength="80.100" lengthAdjust="spacingAndGlyphs">sur elle-même</text>
<path d="M555,582L565,597H580.500M580.500,591V623" fill="none" stroke="#c9d5e3" stroke-width=".6"/>
<text class="m b" x="432.700" y="496" font-size="13.500" fill="#fff" textLength="35.300" lengthAdjust="spacingAndGlyphs">Nord</text>
<text class="m b" x="442.500" y="642.600" font-size="13.500" fill="#fff" textLength="26.500" lengthAdjust="spacingAndGlyphs">Sud</text>
<text class="m l" x="398" y="473.800" textLength="83" lengthAdjust="spacingAndGlyphs">Axe de la Terre</text>
<path d="M397,478H481M473,478.400L487,497" fill="none" stroke="#dfe6ee" stroke-width=".6"/>

<rect x="897.500" y="282.400" width="205.200" height="41.300" fill="url(#g2)"/>
<text class="m w" x="900.600" y="300" textLength="198.400" lengthAdjust="spacingAndGlyphs">Équinoxe de printemps:</text>
<text class="m w" x="900.600" y="317.400" textLength="114.400" lengthAdjust="spacingAndGlyphs">20 ou 21 mars</text>
<text class="m l" x="900.600" y="338.800" textLength="145.400" lengthAdjust="spacingAndGlyphs">Le jour est égal à la nuit,</text>
<text class="m l" x="900.600" y="352.800" textLength="47.400" lengthAdjust="spacingAndGlyphs">partout.</text>

<rect x="871" y="471.900" width="162.500" height="39.100" fill="url(#g3)"/>
<text class="m w" x="874.300" y="488.800" textLength="133.400" lengthAdjust="spacingAndGlyphs">Solstice d'hiver:</text>
<text class="m w" x="874.300" y="507" textLength="155.600" lengthAdjust="spacingAndGlyphs">21 ou 22 décembre</text>
<text class="m w2" x="874.300" y="525" textLength="101.300" lengthAdjust="spacingAndGlyphs">(très rarement</text>
<text class="m w2" x="874.300" y="542" textLength="101.700" lengthAdjust="spacingAndGlyphs">le 20 ou le 23)</text>
<text class="m l" x="875" y="565.300" textLength="136.200" lengthAdjust="spacingAndGlyphs">Chez nous, c'est le jour</text>
<text class="m l" x="875" y="578.500" textLength="89" lengthAdjust="spacingAndGlyphs">le plus court et</text>
<text class="m l" x="875" y="592.800" textLength="125" lengthAdjust="spacingAndGlyphs">la nuit la plus longue.</text>

<rect x="677.700" y="818.900" width="186" height="40.400" fill="url(#g4)"/>
<text class="m w" x="682.700" y="836.400" textLength="176.800" lengthAdjust="spacingAndGlyphs">Équinoxe d'automne:</text>
<text class="m w" x="682.700" y="854" textLength="165.300" lengthAdjust="spacingAndGlyphs">22 ou 23 septembre</text>
<text class="m l" x="682" y="878" textLength="145" lengthAdjust="spacingAndGlyphs">Le jour est égal à la nuit,</text>
<text class="m l" x="682" y="891.500" textLength="46.600" lengthAdjust="spacingAndGlyphs">partout.</text>

<!-- white boxes -->
<rect x="393.500" y="769.600" width="261.300" height="139.200" rx="10" fill="#fff"/>
<text class="m b" x="400" y="794.400" font-size="18" fill="#c8943a" textLength="214" lengthAdjust="spacingAndGlyphs">Des saisons inversées</text>
<path d="M399,817.600H481.300L478,831H396.600Z" fill="#f4ea3d"/>
<text class="m k" x="400" y="814.900" textLength="210" lengthAdjust="spacingAndGlyphs">Les saisons sont opposées dans les</text>
<text class="m k" x="400" y="828.700" textLength="75.200" lengthAdjust="spacingAndGlyphs">hémisphères</text>
<text class="m k" x="479.800" y="828.700" textLength="154.300" lengthAdjust="spacingAndGlyphs">Nord et Sud. Par exemple,</text>
<text class="m k" x="400" y="842.400" textLength="235.500" lengthAdjust="spacingAndGlyphs">au solstice d'été, l'hémisphère Nord (où</text>
<text class="m k" x="400" y="856" textLength="224.500" lengthAdjust="spacingAndGlyphs">se trouve la France) est le plus éclairé</text>
<text class="m k" x="400" y="870" textLength="245.800" lengthAdjust="spacingAndGlyphs">par le Soleil et il reçoit le plus de chaleur:</text>
<text class="m k" x="400" y="883.800" textLength="249.400" lengthAdjust="spacingAndGlyphs">l'été y commence. Dans l'hémisphère Sud,</text>
<text class="m k" x="400" y="897.400" textLength="215.200" lengthAdjust="spacingAndGlyphs">au contraire, c'est l'hiver qui débute.</text>

<rect x="945.500" y="789" width="186.500" height="93.800" rx="8" fill="#fff"/>
<circle cx="1112.600" cy="768.500" r="47" fill="#fff"/>
<g clip-path="url(#palm)">
<rect x="1060" y="786" width="110" height="10" fill="#7fb0e0"/>
<rect x="1060" y="795.500" width="110" height="25" fill="#d9b45c"/>
<circle cx="1073" cy="740.800" r="18" fill="#e8c14e"/>
<path d="M1095,731L1101,727M1095,741H1105M1092,750L1098,755M1083,758L1089,767M1072,763V772" stroke="#e8c14e" stroke-width="1"/>
</g>
<path d="M1122.900,760.400L1121.500,789.800L1123.500,802H1133.500L1127,789.800L1126.200,760.400Z" fill="#7a5a33"/>
<path d="M1122,760C1116,754 1110,754 1103.500,757C1110,748 1120,747 1124,754C1130,745 1145,745 1152,753C1142,752 1134,754 1128,760C1138,760 1146,766 1145,776C1140,768 1132,764 1126,763C1120,768 1112,773 1109,781C1106,770 1112,762 1122,760Z" fill="#5a8a3c"/>
<text class="m b" x="954" y="813.300" font-size="18" fill="#d99a32" textLength="121.700" lengthAdjust="spacingAndGlyphs">À l'équateur</text>
<text class="m k" x="954" y="832.700" textLength="130" lengthAdjust="spacingAndGlyphs">Dans la zone entre les</text>
<text class="m k" x="954" y="846.300" textLength="157" lengthAdjust="spacingAndGlyphs">tropiques, le Soleil chauffe</text>
<text class="m k" x="954" y="859.800" textLength="155.600" lengthAdjust="spacingAndGlyphs">toujours fort et les saisons</text>
<text class="m k" x="954" y="873.800" textLength="165.400" lengthAdjust="spacingAndGlyphs">ne sont pas très différentes.</text>
<text x="1178" y="914" font-size="7.500" fill="#9aa5b5" transform="rotate(-90 1178 914)" textLength="46">ART PRESSE</text>
</svg>
</body>
</html>
